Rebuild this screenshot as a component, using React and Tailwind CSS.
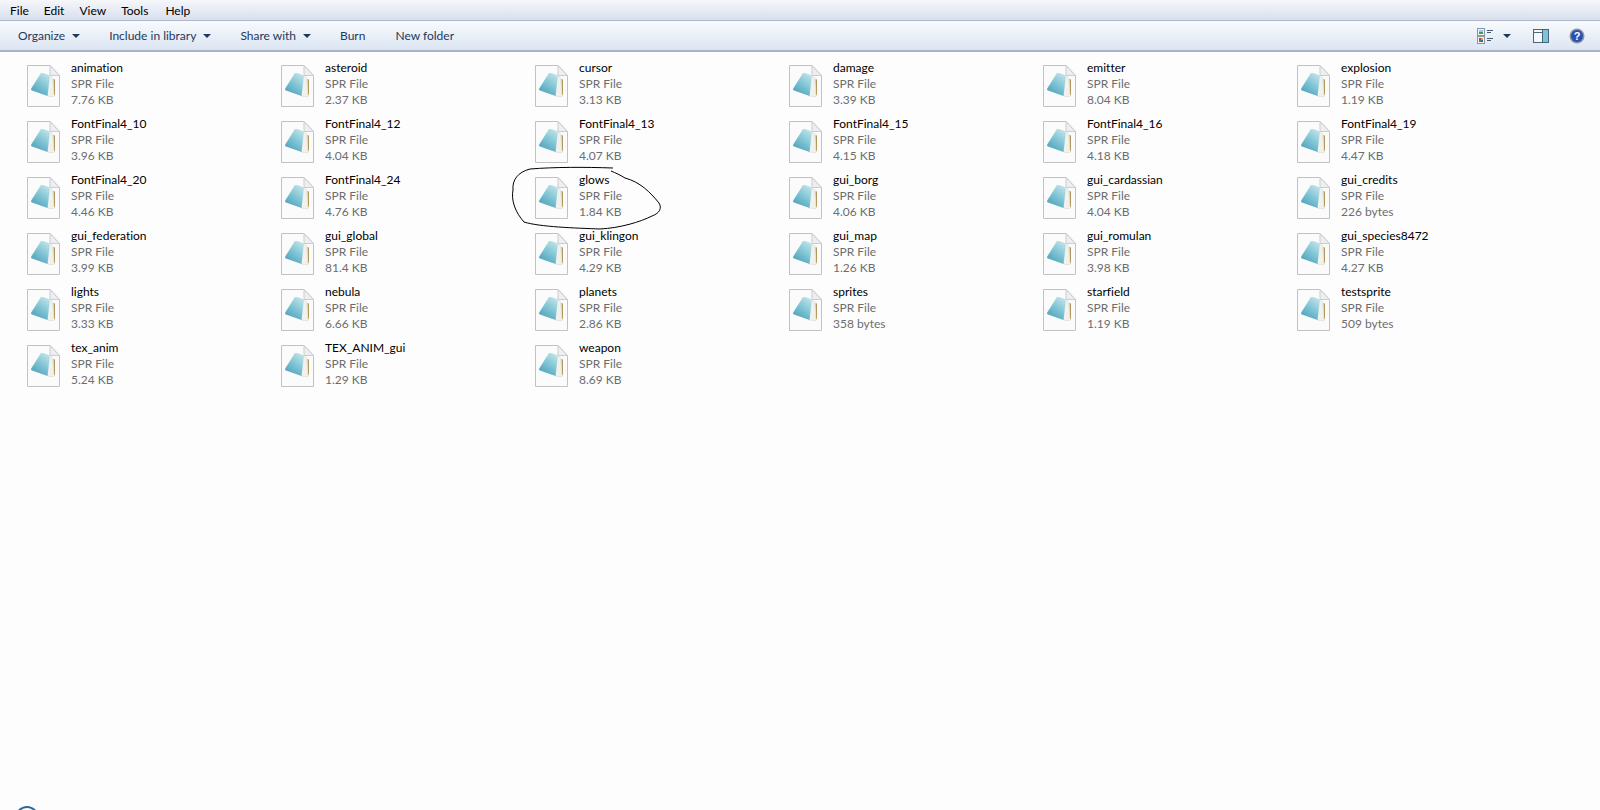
const files = [
  ['animation', '7.76 KB'], ['asteroid', '2.37 KB'], ['cursor', '3.13 KB'], ['damage', '3.39 KB'], ['emitter', '8.04 KB'], ['explosion', '1.19 KB'],
  ['FontFinal4_10', '3.96 KB'], ['FontFinal4_12', '4.04 KB'], ['FontFinal4_13', '4.07 KB'], ['FontFinal4_15', '4.15 KB'], ['FontFinal4_16', '4.18 KB'], ['FontFinal4_19', '4.47 KB'],
  ['FontFinal4_20', '4.46 KB'], ['FontFinal4_24', '4.76 KB'], ['glows', '1.84 KB'], ['gui_borg', '4.06 KB'], ['gui_cardassian', '4.04 KB'], ['gui_credits', '226 bytes'],
  ['gui_federation', '3.99 KB'], ['gui_global', '81.4 KB'], ['gui_klingon', '4.29 KB'], ['gui_map', '1.26 KB'], ['gui_romulan', '3.98 KB'], ['gui_species8472', '4.27 KB'],
  ['lights', '3.33 KB'], ['nebula', '6.66 KB'], ['planets', '2.86 KB'], ['sprites', '358 bytes'], ['starfield', '1.19 KB'], ['testsprite', '509 bytes'],
  ['tex_anim', '5.24 KB'], ['TEX_ANIM_gui', '1.29 KB'], ['weapon', '8.69 KB'],
];

const Caret = () => (
  <svg width="8" height="4" viewBox="0 0 8 4" className="ml-[7px] mt-[1px]">
    <path d="M0 0h8L4 4z" fill="#1e395b" />
  </svg>
);

const FileIcon = () => (
  <svg width="34" height="42" viewBox="0 0 34 42" className="ml-[1px] shrink-0">
    <defs>
      <linearGradient id="pad" x1="0.8" y1="0" x2="0.2" y2="1">
        <stop offset="0" stopColor="#bfe4ea" />
        <stop offset="0.55" stopColor="#78c0d2" />
        <stop offset="1" stopColor="#4c9db6" />
      </linearGradient>
    </defs>
    <path d="M.5 .5H23L32.500 10.500V41.500H.5z" fill="#fbfbfb" stroke="#bfc3c6" />
    <path d="M23 .5V10.500H32.500z" fill="#eceef0" stroke="#c9ccd0" />
    <path d="M26.500 14L28 14.500L28 29L27 31z" fill="#b3965e" />
    <path d="M20 10L25.500 12.500L27 32L20 31z" fill="#f1f2ec" stroke="#d5d6cc" strokeWidth=".5" />
    <path d="M14 8C16 7.500 20 9 23 10.500L20.500 31L5 25.500C3.800 25 3.800 24 4.500 23z" fill="url(#pad)" />
  </svg>
);

const FileItem = ({ name, size }) => (
  <div className="flex h-[56px] items-start">
    <FileIcon />
    <div className="ml-[10px] mt-[-5px] flex flex-col text-[12px] leading-[16px]">
      <span className="text-black">{name}</span>
      <span className="text-[#6d6d6d]">SPR File</span>
      <span className="text-[#6d6d6d]">{size}</span>
    </div>
  </div>
);

export default function App() {
  return (
    <div className="relative h-[810px] w-[1600px] overflow-hidden bg-[#fdfdfd] font-['Lato',sans-serif] [font-variant-ligatures:none]">
      {/* Menu bar */}
      <div className="flex h-[21px] items-center gap-[15px] border-b border-[#b0b9cc] bg-gradient-to-b from-[#f6f7fb] to-[#d9dfee] pl-[10px] pt-[2px] text-[12px] text-black">
        <span>File</span>
        <span>Edit</span>
        <span>View</span>
        <span>Tools</span>
        <span className="ml-[2px]">Help</span>
      </div>

      {/* Toolbar */}
      <div className="flex h-[31px] items-center border-b-2 border-[#a9b4c8] bg-gradient-to-b from-[#f8fbfe] to-[#dbe5f2] pl-[18px] text-[12px] text-[#1e395b]">
        <div className="flex items-center">Organize<Caret /></div>
        <div className="ml-[29px] flex items-center">Include in library<Caret /></div>
        <div className="ml-[29px] flex items-center">Share with<Caret /></div>
        <span className="ml-[29px]">Burn</span>
        <span className="ml-[30px]">New folder</span>
        <div className="ml-auto flex items-center pr-[15px]">
          <svg width="16" height="16" viewBox="0 0 16 16">
            <rect x=".5" y=".5" width="7" height="7" fill="#eef3f8" stroke="#8a97a8" />
            <rect x="2" y="2" width="4" height="2" fill="#9fc8e8" />
            <rect x="2" y="4" width="4" height="2" fill="#3f9a6a" />
            <rect x=".5" y="8.500" width="7" height="7" fill="#eef3f8" stroke="#8a97a8" />
            <rect x="2" y="10" width="2" height="2" fill="#c8402c" />
            <rect x="4" y="10" width="2" height="2" fill="#d8a82c" />
            <rect x="2" y="12" width="2" height="2" fill="#3f8f4a" />
            <rect x="4" y="12" width="2" height="2" fill="#3a62b0" />
            <path d="M10 2.500h6M10 4.500h4M10 10.500h6M10 12.500h4" stroke="#4a5a70" />
          </svg>
          <svg width="8" height="4" viewBox="0 0 8 4" className="ml-[10px]"><path d="M0 0h8L4 4z" fill="#1e395b" /></svg>
          <svg width="16" height="14" viewBox="0 0 16 14" className="ml-[22px]">
            <rect x=".5" y=".5" width="15" height="13" fill="#f4f8fb" stroke="#4a6478" />
            <rect x="10" y="1" width="5" height="12" fill="#7fc2dc" />
            <path d="M9.500 1v12M1 3.500h8" stroke="#4a6478" />
          </svg>
          <svg width="16" height="16" viewBox="0 0 16 16" className="ml-[20px]">
            <circle cx="8" cy="8" r="7.500" fill="#8b93a0" />
            <circle cx="8" cy="8" r="6" fill="#2b4fb0" />
            <text x="8" y="12" textAnchor="middle" fontSize="11" fontWeight="700" fill="#fff" fontFamily="Liberation Sans, sans-serif">?</text>
          </svg>
        </div>
      </div>

      {/* File grid */}
      <div className="grid grid-cols-[repeat(6,254px)] pl-[26px] pt-[13px]">
        {files.map(([name, size]) => (
          <FileItem key={name} name={name} size={size} />
        ))}
      </div>

      {/* Hand-drawn circle around glows */}
      <svg width="1600" height="810" viewBox="0 0 1600 810" fill="none" className="pointer-events-none absolute left-0 top-0">
        <path
          d="M613 168C585 167 555 167 530 169C518 172 512 180 513 190C511 200 515 212 524 222C540 227 575 228 600 229C620 228 640 222 652 216C660 213 662 208 659 203C650 192 640 182 625 178C620 175 616 173 611 171"
          stroke="#000"
          strokeWidth="1"
        />
        <circle cx="27" cy="818" r="11" stroke="#2a6a9e" strokeWidth="2" />
      </svg>
    </div>
  );
}
